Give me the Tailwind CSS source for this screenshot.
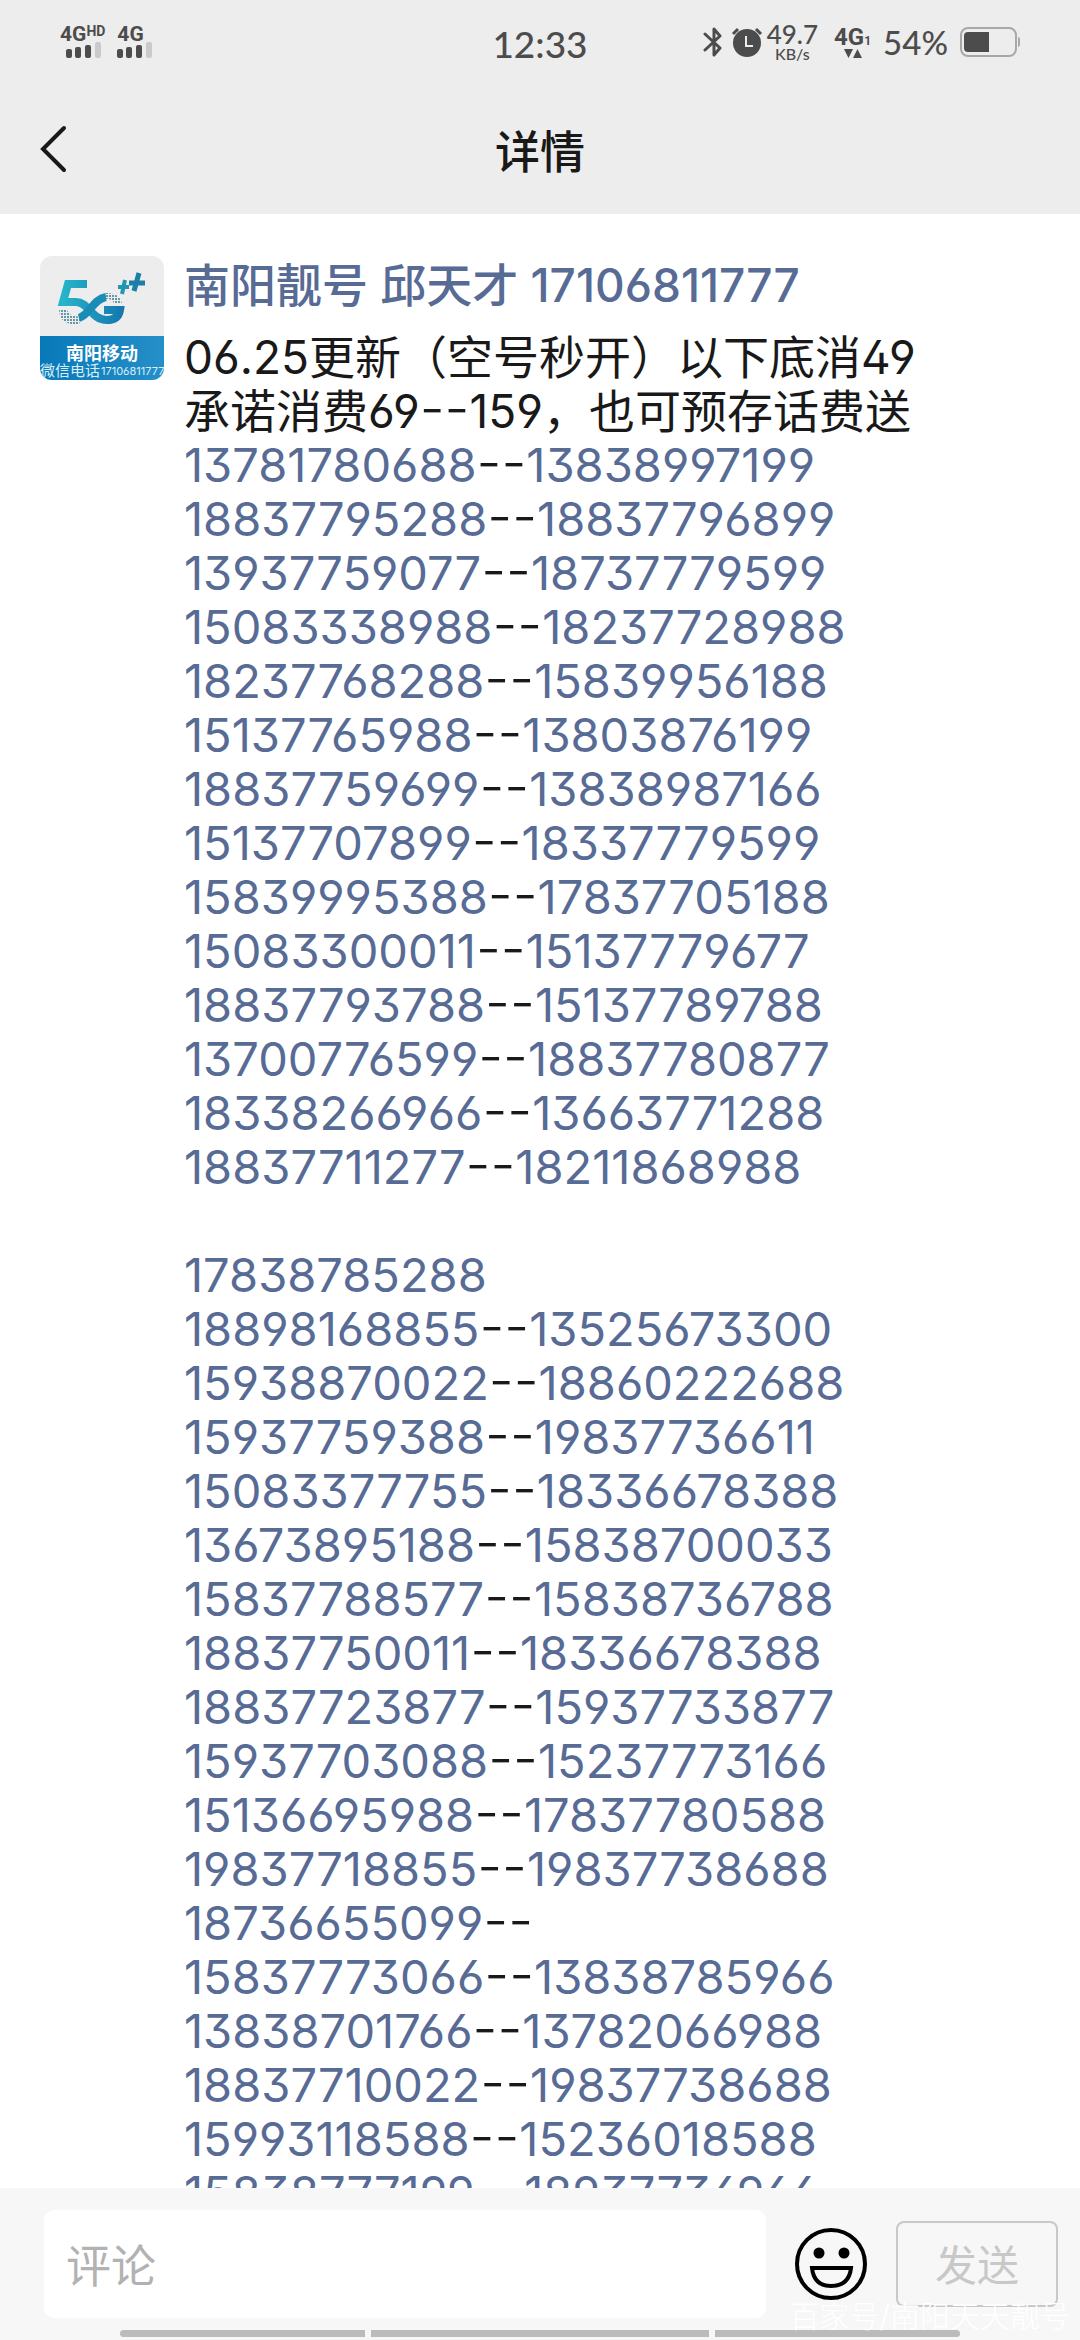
<!DOCTYPE html>
<html lang="zh-CN">
<head>
  <meta charset="UTF-8">
  <meta name="viewport" content="width=device-width, initial-scale=1.0">
  <title>详情</title>
  <script src="https://cdn.jsdelivr.net/npm/@tailwindcss/browser@4"></script>
</head>
<body class="flex h-screen flex-col overflow-hidden bg-white font-['Inter','Noto_Sans_CJK_SC',sans-serif] text-[#191919] [font-feature-settings:'ss01']">
  <header class="shrink-0 bg-[#ededed]">
    <!-- status bar -->
    <div class="grid h-21 grid-cols-[1fr_auto_1fr] items-center pl-15 pr-15 text-[#4c4c4c]">
      <div class="flex gap-3 font-['Roboto'] font-bold">
        <div>
          <div class="flex items-start text-[21px] leading-4"><span>4G</span><span class="text-sm leading-2.5">HD</span></div>
          <svg class="ml-1.5 block h-4 w-9" viewBox="0 0 36 16" fill="currentColor">
            <rect y="7" width="6" height="9" rx="2" /><rect x="9" y="5" width="6" height="11" rx="2" /><rect x="19" y="3" width="6" height="13" rx="2" /><rect x="29" width="6" height="16" rx="2" fill="#cacaca" />
          </svg>
        </div>
        <div>
          <div class="text-[21px] leading-4">4G</div>
          <svg class="block h-4 w-9" viewBox="0 0 36 16" fill="currentColor">
            <rect y="7" width="6" height="9" rx="2" /><rect x="9" y="5" width="6" height="11" rx="2" /><rect x="19" y="3" width="6" height="13" rx="2" /><rect x="29" width="6" height="16" rx="2" fill="#cacaca" />
          </svg>
        </div>
      </div>
      <div class="pt-1 font-['Lato'] text-[37px] font-medium leading-10">12:33</div>
      <div class="flex items-center justify-end font-['Lato']">
        <svg class="h-8 w-5" viewBox="0 0 20 32" fill="none" stroke="currentColor" stroke-width="3" stroke-linejoin="round" stroke-linecap="round">
          <path d="M2 8 17 22 11 29V3L17 10 2 24" />
        </svg>
        <svg class="ml-2 h-8 w-8" viewBox="0 0 32 32">
          <circle cx="16" cy="17" r="14" fill="currentColor" />
          <path d="M2 8 7 3M25 3 30 8" stroke="currentColor" stroke-width="3" />
          <path d="M15 10V20H22" fill="none" stroke="#ededed" stroke-width="2" />
        </svg>
        <div class="ml-1 text-center font-medium">
          <div class="text-[26px] leading-6">49.7</div>
          <div class="text-base leading-4">KB/s</div>
        </div>
        <div class="ml-4 flex flex-col items-center font-['Roboto']">
          <div class="flex items-end text-2xl font-bold leading-6"><span>4G</span><span class="text-xs leading-4">1</span></div>
          <svg class="h-2.5 w-5" viewBox="0 0 20 10" fill="currentColor"><path d="M1 0H10L5.500 9ZM10 9H19L14.500 0Z" /></svg>
        </div>
        <div class="ml-3 text-[33px] font-medium leading-8">54%</div>
        <svg class="ml-3 h-8 w-15" viewBox="0 0 60 32">
          <rect x="1" y="2" width="55" height="28" rx="7" fill="none" stroke="#a8a8a8" stroke-width="2" />
          <path d="M29 6V26H8Q4 26 4 22V10Q4 6 8 6Z" fill="currentColor" />
          <path d="M58 11Q60 11 60 14V18Q60 21 58 21Z" fill="#a8a8a8" />
        </svg>
      </div>
    </div>
    <!-- title bar -->
    <div class="grid h-[130px] grid-cols-[1fr_auto_1fr] items-center px-10">
      <button type="button" aria-label="返回" class="w-7">
        <svg class="h-12 w-7" viewBox="0 0 28 48" fill="none" stroke="currentColor" stroke-width="4" stroke-linecap="round"><path d="M24 3 3 24 24 45" /></svg>
      </button>
      <h1 class="pt-2 text-[45px] font-medium leading-14">详情</h1>
    </div>
  </header>

  <main class="min-h-0 flex-1 overflow-hidden px-10 pt-10">
    <article class="flex gap-5">
      <svg class="mt-0.5 h-31 w-31 shrink-0 rounded-xl" viewBox="0 0 124 124" role="img" aria-label="南阳移动">
        <defs>
          <linearGradient id="logo" x1="0" x2="1"><stop stop-color="#25b5ca" /><stop offset="1" stop-color="#1679ae" /></linearGradient>
          <linearGradient id="band" x1="0" x2="1"><stop stop-color="#0879b8" /><stop offset="1" stop-color="#258fc9" /></linearGradient>
          <pattern id="dots" width="3" height="3" patternUnits="userSpaceOnUse"><circle cx="1" cy="1" r="1" fill="#36798f" /></pattern>
        </defs>
        <rect width="124" height="124" fill="#ededee" />
        <rect y="80" width="124" height="44" fill="url(#band)" />
        <path d="M47 28H28L23 46H36C49 46 51 64 67 64C75 64 79 60 80 54H64" fill="none" stroke="url(#logo)" stroke-width="8" />
        <path d="M39 62C50 59 53 43 66 41" fill="none" stroke="#1a8cb8" stroke-width="8" />
        <path d="M19 54H27Q30 62 42 60L39 68Q20 70 19 54ZM65 37Q79 36 82 47H74Q71 42 65 43Z" fill="url(#dots)" />
        <path d="M78 31H89M85 24 82 38" stroke="#2096b2" stroke-width="4" />
        <path d="M89 27H105M99 17 94 35" stroke="#1b7fa8" stroke-width="5" />
        <text x="26" y="104" fill="#fff" font-size="18" font-weight="700">南阳移动</text>
        <text x="0" y="120" fill="#d8edf7" font-size="15">微信电话</text>
        <text x="61" y="119" fill="#d8edf7" font-size="11">17106811777</text>
      </svg>
      <div class="min-w-0 flex-1 pt-1 text-[46px] leading-13.5 [&_a]:text-[#576b95] [&_a]:text-[47px] [&_a]:leading-10 [&_span]:text-[55px] [&_span]:font-light [&_span]:leading-10">
        <h2 class="mb-4.5 font-medium text-[#576b95]">南阳靓号 邱天才 17106811777</h2>
        <p>06.25更新（空号秒开）以下底消49<br>承诺消费69<span>--</span>159，也可预存话费送</p>
        <div>
          <p><a href="#">13781780688</a><span>--</span><a href="#">13838997199</a></p>
          <p><a href="#">18837795288</a><span>--</span><a href="#">18837796899</a></p>
          <p><a href="#">13937759077</a><span>--</span><a href="#">18737779599</a></p>
          <p><a href="#">15083338988</a><span>--</span><a href="#">18237728988</a></p>
          <p><a href="#">18237768288</a><span>--</span><a href="#">15839956188</a></p>
          <p><a href="#">15137765988</a><span>--</span><a href="#">13803876199</a></p>
          <p><a href="#">18837759699</a><span>--</span><a href="#">13838987166</a></p>
          <p><a href="#">15137707899</a><span>--</span><a href="#">18337779599</a></p>
          <p><a href="#">15839995388</a><span>--</span><a href="#">17837705188</a></p>
          <p><a href="#">15083300011</a><span>--</span><a href="#">15137779677</a></p>
          <p><a href="#">18837793788</a><span>--</span><a href="#">15137789788</a></p>
          <p><a href="#">13700776599</a><span>--</span><a href="#">18837780877</a></p>
          <p><a href="#">18338266966</a><span>--</span><a href="#">13663771288</a></p>
          <p><a href="#">18837711277</a><span>--</span><a href="#">18211868988</a></p>
          <p><br></p>
          <p><a href="#">17838785288</a></p>
          <p><a href="#">18898168855</a><span>--</span><a href="#">13525673300</a></p>
          <p><a href="#">15938870022</a><span>--</span><a href="#">18860222688</a></p>
          <p><a href="#">15937759388</a><span>--</span><a href="#">19837736611</a></p>
          <p><a href="#">15083377755</a><span>--</span><a href="#">18336678388</a></p>
          <p><a href="#">13673895188</a><span>--</span><a href="#">15838700033</a></p>
          <p><a href="#">15837788577</a><span>--</span><a href="#">15838736788</a></p>
          <p><a href="#">18837750011</a><span>--</span><a href="#">18336678388</a></p>
          <p><a href="#">18837723877</a><span>--</span><a href="#">15937733877</a></p>
          <p><a href="#">15937703088</a><span>--</span><a href="#">15237773166</a></p>
          <p><a href="#">15136695988</a><span>--</span><a href="#">17837780588</a></p>
          <p><a href="#">19837718855</a><span>--</span><a href="#">19837738688</a></p>
          <p><a href="#">18736655099</a><span>--</span></p>
          <p><a href="#">15837773066</a><span>--</span><a href="#">13838785966</a></p>
          <p><a href="#">13838701766</a><span>--</span><a href="#">13782066988</a></p>
          <p><a href="#">18837710022</a><span>--</span><a href="#">19837738688</a></p>
          <p><a href="#">15993118588</a><span>--</span><a href="#">15236018588</a></p>
          <p><a href="#">15838777199</a><span>--</span><a href="#">18937736966</a></p>
        </div>
      </div>
    </article>
  </main>

  <footer class="relative shrink-0 bg-[#f7f7f7] pt-5.5">
    <form class="flex items-center pl-11 pr-5.5">
      <input type="text" aria-label="评论" placeholder="评论" class="h-27 min-w-0 flex-1 rounded-[10px] bg-white px-5.5 pt-1 text-[45px] placeholder:text-[#b2b2b2]">
      <button type="button" aria-label="表情" class="mx-7 shrink-0">
        <svg class="h-[74px] w-[74px]" viewBox="0 0 74 74" fill="none" stroke="#000" stroke-width="4">
          <circle cx="37" cy="37" r="34" />
          <circle cx="25" cy="26" r="5.500" fill="#000" stroke="none" /><circle cx="50" cy="26" r="5.500" fill="#000" stroke="none" />
          <path d="M18 41H57Q55 59 37 59Q20 59 18 41Z" />
        </svg>
      </button>
      <button type="button" class="h-[86px] w-[162px] shrink-0 rounded-lg border-2 border-[#c8c8c8] pt-1 text-[42px] leading-12 text-[#c8c8c8]">发送</button>
    </form>
    <!-- gesture hints -->
    <div class="flex h-5.5 justify-center gap-1.5 pt-3">
      <i class="h-[7px] w-[245px] rounded-l-full bg-[#bbb]"></i>
      <i class="h-[7px] w-[338px] bg-[#bbb]"></i>
      <i class="h-[7px] w-[245px] rounded-r-full bg-[#bbb]"></i>
    </div>
    <div class="pointer-events-none absolute bottom-1.5 right-2.5 text-3xl font-light leading-9 text-white">百家号/南阳天天靓号</div>
  </footer>
</body>
</html>
